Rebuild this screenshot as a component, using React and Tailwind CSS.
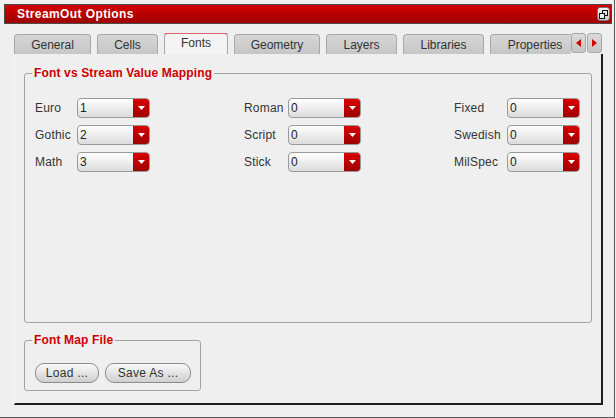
import { ChevronDown } from "lucide-react";

const tabs = [
  { name: "General", w: "w-[77px]" },
  { name: "Cells", w: "w-[61px]" },
  { name: "Fonts", w: "w-[64px]", active: true },
  { name: "Geometry", w: "w-[86px]" },
  { name: "Layers", w: "w-[71px]" },
  { name: "Libraries", w: "w-[81px]" },
  { name: "Properties", w: "w-[90px]" },
];

const columns = [
  { w: "w-[209px]", lw: "w-[42px]", rows: [["Euro", "1"], ["Gothic", "2"], ["Math", "3"]] },
  { w: "w-[210px]", lw: "w-[44px]", rows: [["Roman", "0"], ["Script", "0"], ["Stick", "0"]] },
  { w: "w-[130px]", lw: "w-[53px]", rows: [["Fixed", "0"], ["Swedish", "0"], ["MilSpec", "0"]] },
];

function Combo({ value }) {
  return (
    <div className="flex h-[20px] w-[73px] overflow-hidden rounded-[4px] border border-[#9a9a9a] bg-gradient-to-b from-[#ffffff] to-[#dcdcdc]">
      <div className="flex-1 pl-[2px] leading-[18px] text-[#222]">{value}</div>
      <div className="flex w-[16px] items-center justify-center bg-gradient-to-b from-[#d80000] to-[#a00000]">
        <svg width="7" height="4" viewBox="0 0 7 4">
          <path d="M0 0h7L3.5 4z" fill="#fff" />
        </svg>
      </div>
    </div>
  );
}

function Group({ title, className, children }) {
  return (
    <fieldset className={`rounded-[3px] border border-[#a4a4a4] pl-[10px] ${className}`}>
      <legend className="ml-[-3px] px-[2px] text-[12px] font-bold leading-[16px] tracking-[0.15px] text-[#d00000]">{title}</legend>
      {children}
    </fieldset>
  );
}

function PillButton({ label, w }) {
  return (
    <button className={`h-[20px] ${w} rounded-[9px] border border-[#8c8c8c] bg-gradient-to-b from-[#fafafa] to-[#cfcfcf] text-[12px] leading-[18px] tracking-[0.3px] text-[#333]`}>
      {label}
    </button>
  );
}

function App() {
  return (
    <div className="h-[418px] w-[616px] overflow-hidden bg-[#efefef] font-['Liberation_Sans',Arial,sans-serif] text-[12px] text-[#333]">
      <div className="h-[418px] w-[615px] border-r border-b border-[#5a5a5a] pl-[4px] pt-[4px]">
        <div className="flex h-[20px] w-[608px] items-center justify-between border border-[#4a4a4a] bg-gradient-to-b from-[#d40000] to-[#9e0000] pl-[12px] pr-[1px]">
          <span className="text-[12px] font-bold tracking-[0.4px] text-white">StreamOut Options</span>
          <div className="flex h-[14px] w-[13px] items-center justify-center rounded-[3px] border border-[#777] bg-gradient-to-b from-[#f4f4f4] to-[#c8c8c8]">
            <svg width="9" height="9" viewBox="0 0 9 9" fill="none" stroke="#111" strokeWidth="1">
              <rect x="3.5" y="0.5" width="5" height="5" />
              <rect x="0.5" y="3.5" width="5" height="5" fill="#eee" />
            </svg>
          </div>
        </div>

        <div className="ml-[10px] mt-[9px] w-[589px]">
          <div className="flex h-[21px] items-end">
            <div className="flex h-[21px] w-[557px] items-end gap-[6px] overflow-hidden">
              {tabs.map((t) =>
                t.active ? (
                  <div
                    key={t.name}
                    className={`relative z-10 mb-[-1px] h-[23px] shrink-0 ${t.w} rounded-t-[4px] border-x border-t-2 border-x-[#a8a8a8] border-t-[#e06464] bg-[#f4f4f4] text-center leading-[19px]`}
                  >
                    {t.name}
                  </div>
                ) : (
                  <div
                    key={t.name}
                    className={`h-[20px] shrink-0 ${t.w} rounded-t-[4px] border-x border-t border-[#a8a8a8] bg-gradient-to-b from-[#d6d6d6] to-[#c6c6c6] text-center leading-[20px]`}
                  >
                    {t.name}
                  </div>
                )
              )}
            </div>
            <div className="flex h-[21px] gap-[1px]">
              {["M5 0v8L0 4z", "M0 0v8l5-4z"].map((d) => (
                <div key={d} className="flex h-[20px] w-[15px] items-center justify-center rounded-[3px] border border-[#a8a8a8] bg-gradient-to-b from-[#dcdcdc] to-[#c4c4c4]">
                  <svg width="5" height="8" viewBox="0 0 5 8">
                    <path d={d} fill="#d00000" />
                  </svg>
                </div>
              ))}
            </div>
          </div>

          <div className="h-[351px] w-[589px] border-l border-r-2 border-b-2 border-l-[#fafafa] border-r-[#1e1e1e] border-b-[#1e1e1e] bg-[#efefef] pl-[9px] pt-[11px]">
            <Group title="Font vs Stream Value Mapping" className="h-[258px] w-[568px] pt-[17px]">
              <div className="flex">
                {columns.map((c, i) => (
                  <div key={i} className={`flex ${c.w} flex-col gap-[7px]`}>
                    {c.rows.map(([label, value]) => (
                      <div key={label} className="flex items-center">
                        <span className={`${c.lw} tracking-[0.2px] text-[#333]`}>{label}</span>
                        <Combo value={value} />
                      </div>
                    ))}
                  </div>
                ))}
              </div>
            </Group>

            <Group title="Font Map File" className="mt-[9px] h-[59px] w-[177px] pt-[15px]">
              <div className="flex gap-[6px]">
                <PillButton label="Load ..." w="w-[64px]" />
                <PillButton label="Save As ..." w="w-[86px]" />
              </div>
            </Group>
          </div>
        </div>
      </div>
    </div>
  );
}

export default App;
